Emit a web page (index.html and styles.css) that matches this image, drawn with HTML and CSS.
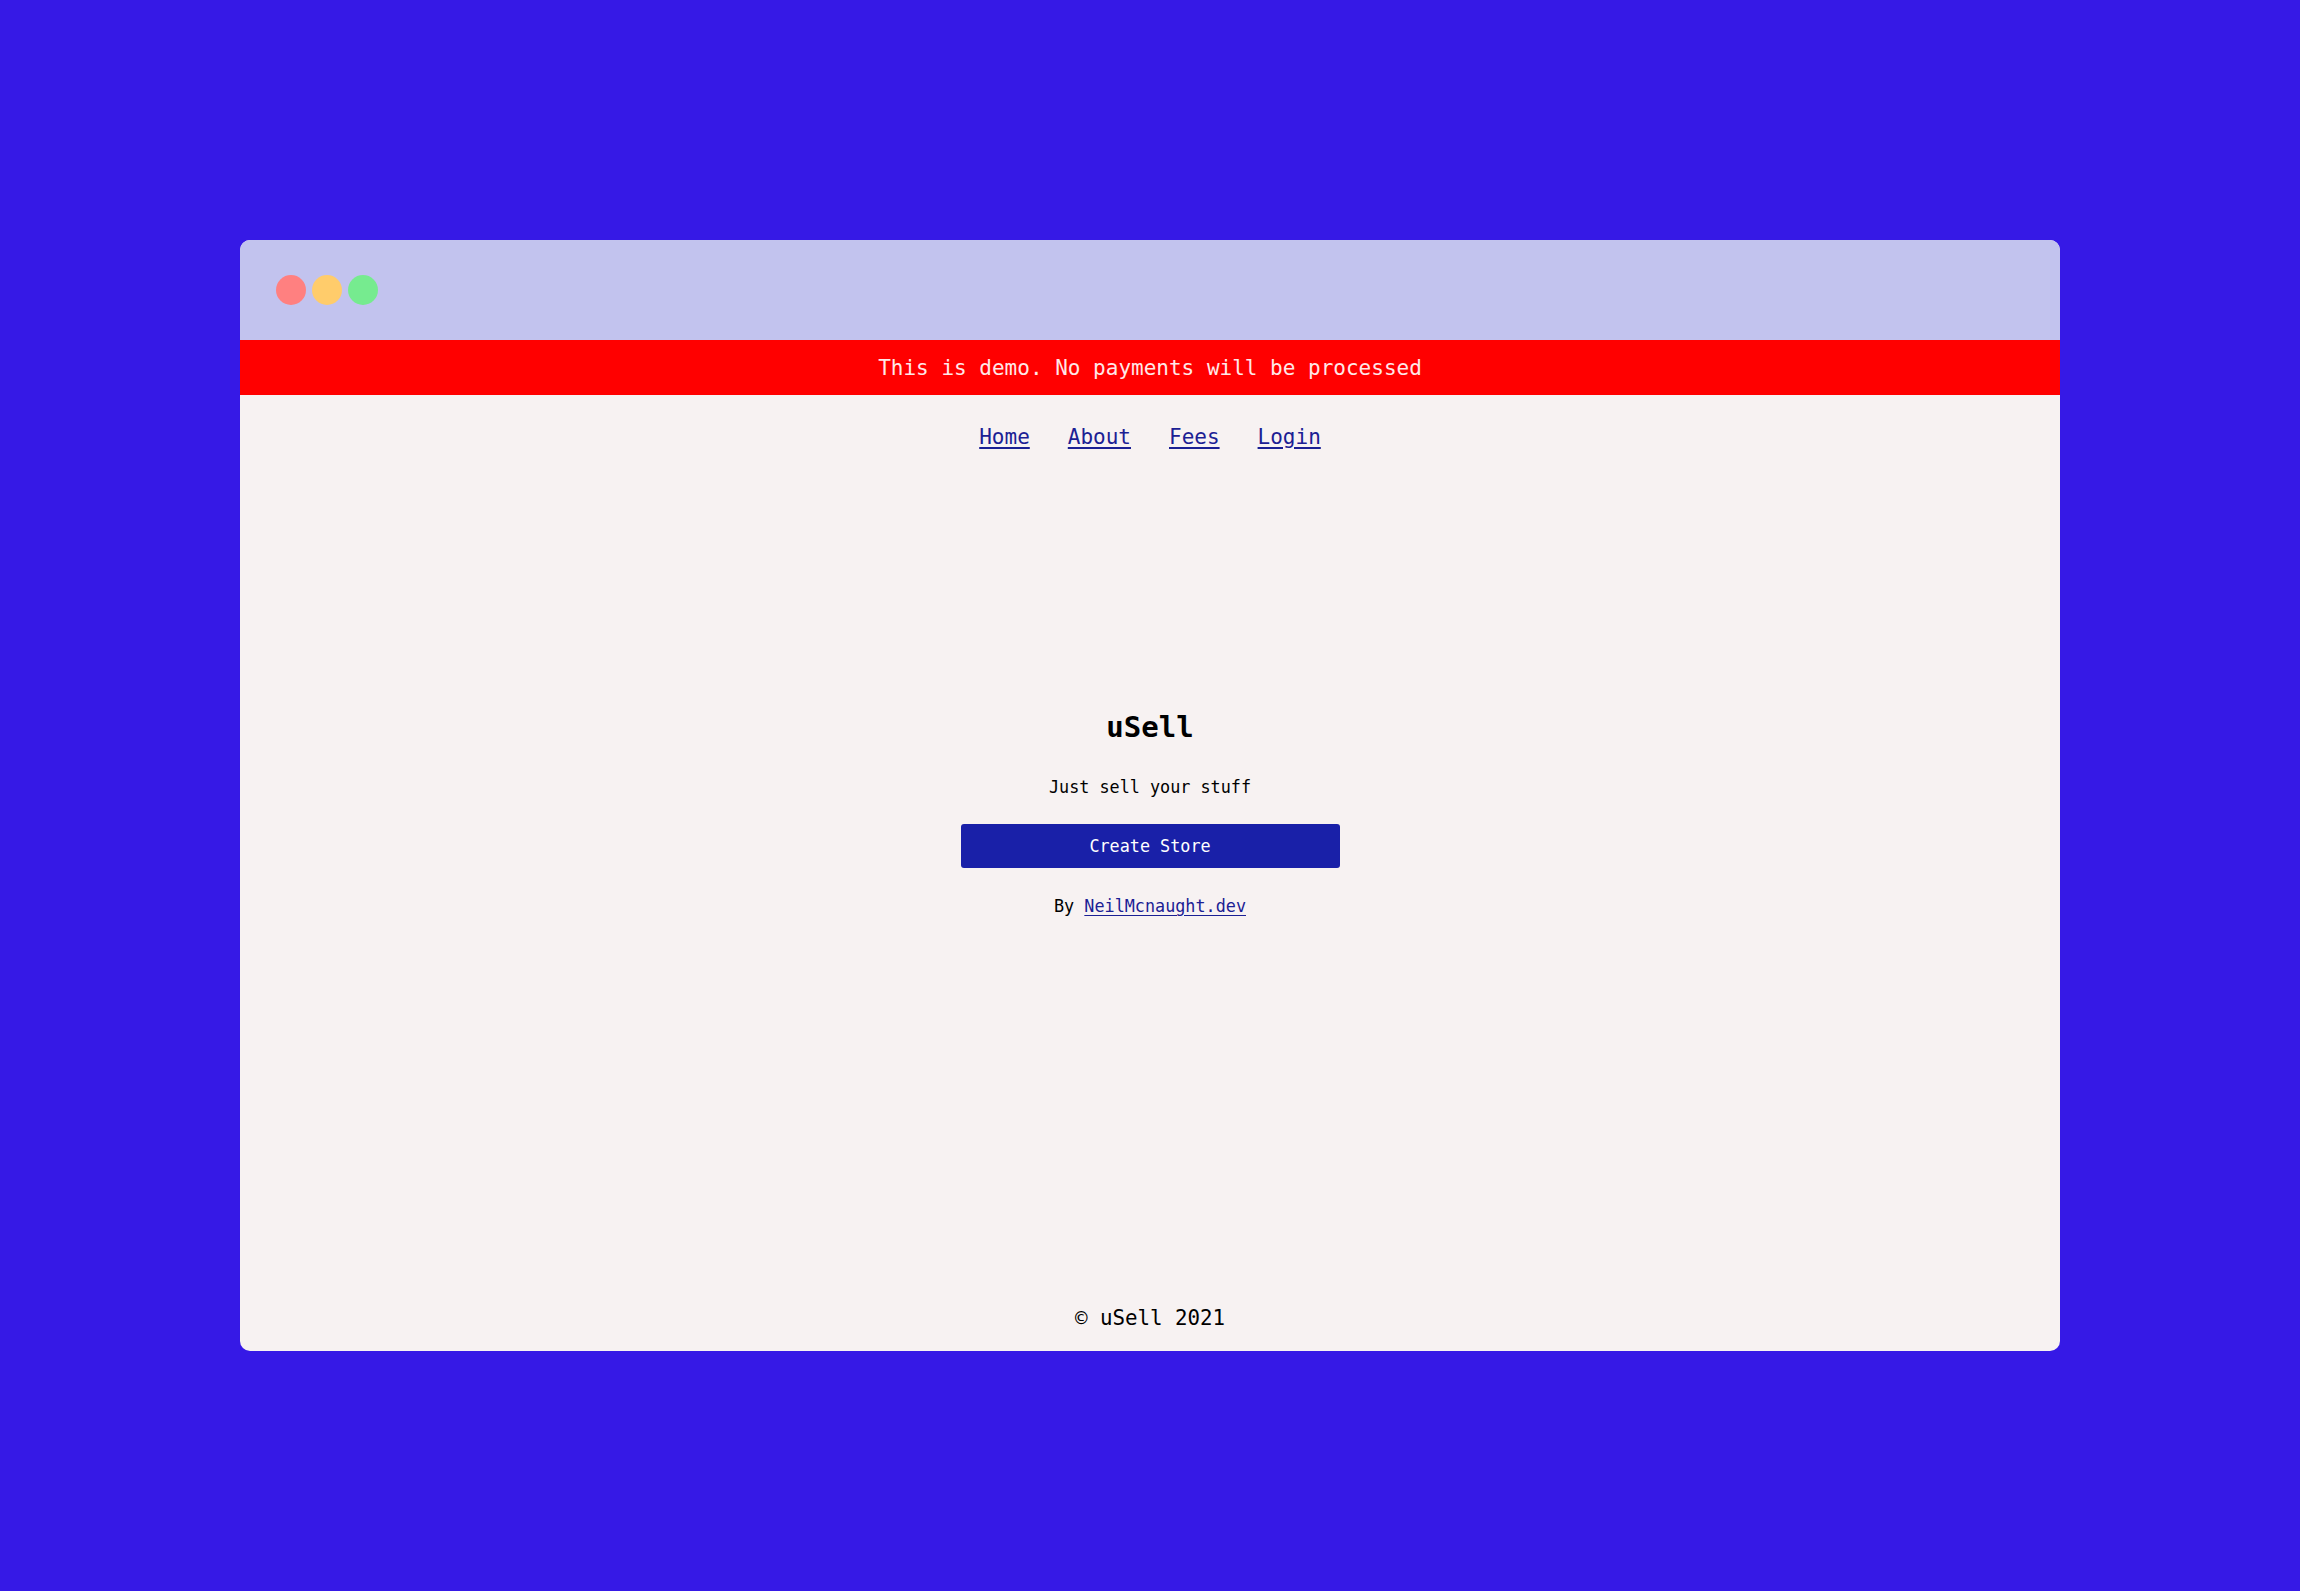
FILE: index.html
```html
<!DOCTYPE html>
<html lang="en">
<head>
<meta charset="utf-8">
<title>uSell</title>
<link rel="stylesheet" href="styles.css">
</head>
<body>
<div class="window">
  <div class="titlebar">
    <span class="dot dot-red"></span>
    <span class="dot dot-yellow"></span>
    <span class="dot dot-green"></span>
  </div>
  <div class="banner">This is demo. No payments will be processed</div>
  <div class="content">
    <nav class="nav">
      <a href="#">Home</a>
      <a href="#">About</a>
      <a href="#">Fees</a>
      <a href="#">Login</a>
    </nav>
    <main class="hero">
      <h1 class="title">uSell</h1>
      <p class="tagline">Just sell your stuff</p>
      <button class="cta" type="button">Create Store</button>
      <p class="byline">By <a href="#">NeilMcnaught.dev</a></p>
    </main>
    <footer class="footer">© uSell 2021</footer>
  </div>
</div>
</body>
</html>
```

FILE: styles.css
```css
html, body {
  margin: 0;
  padding: 0;
}
body {
  background: #3619e6;
  width: 2300px;
  height: 1591px;
  display: flex;
  align-items: center;
  justify-content: center;
  font-family: "DejaVu Sans Mono", "Liberation Mono", monospace;
}
.window {
  width: 1820px;
  height: 1111px;
  border-radius: 10px;
  overflow: hidden;
  display: flex;
  flex-direction: column;
  background: #f7f2f2;
}
.titlebar {
  height: 100px;
  flex: none;
  background: #c2c3ee;
  display: flex;
  align-items: center;
  gap: 6px;
  padding-left: 36px;
}
.dot {
  width: 30px;
  height: 30px;
  border-radius: 50%;
}
.dot-red { background: #ff8080; }
.dot-yellow { background: #ffcc6b; }
.dot-green { background: #76eb8f; }
.banner {
  height: 55px;
  flex: none;
  background: #ff0000;
  color: #ffe8e8;
  font-size: 21px;
  display: flex;
  align-items: center;
  justify-content: center;
}
.content {
  flex: 1;
  display: flex;
  flex-direction: column;
  align-items: center;
}
.nav {
  display: flex;
  gap: 38px;
  padding-top: 29px;
  font-size: 21px;
  line-height: 26px;
}
.nav a, .byline a {
  color: #1b2094;
  text-decoration: underline;
  text-underline-offset: 3px;
}
.hero {
  display: flex;
  flex-direction: column;
  align-items: center;
  margin-top: 260px;
}
.title {
  margin: 0;
  font-size: 29px;
  line-height: 34px;
  font-weight: bold;
  color: #000;
}
.tagline {
  margin: 32px 0 0;
  font-size: 16.8px;
  line-height: 22px;
  color: #000;
}
.cta {
  margin-top: 26px;
  width: 379px;
  height: 44px;
  border: none;
  border-radius: 3px;
  background: #1920a8;
  color: #fff;
  font-family: inherit;
  font-size: 16.8px;
  cursor: pointer;
}
.byline {
  margin: 27px 0 0;
  font-size: 16.8px;
  line-height: 22px;
  color: #000;
}
.footer {
  margin-top: auto;
  padding-bottom: 20px;
  font-size: 20.8px;
  line-height: 26px;
  color: #000;
}
```
